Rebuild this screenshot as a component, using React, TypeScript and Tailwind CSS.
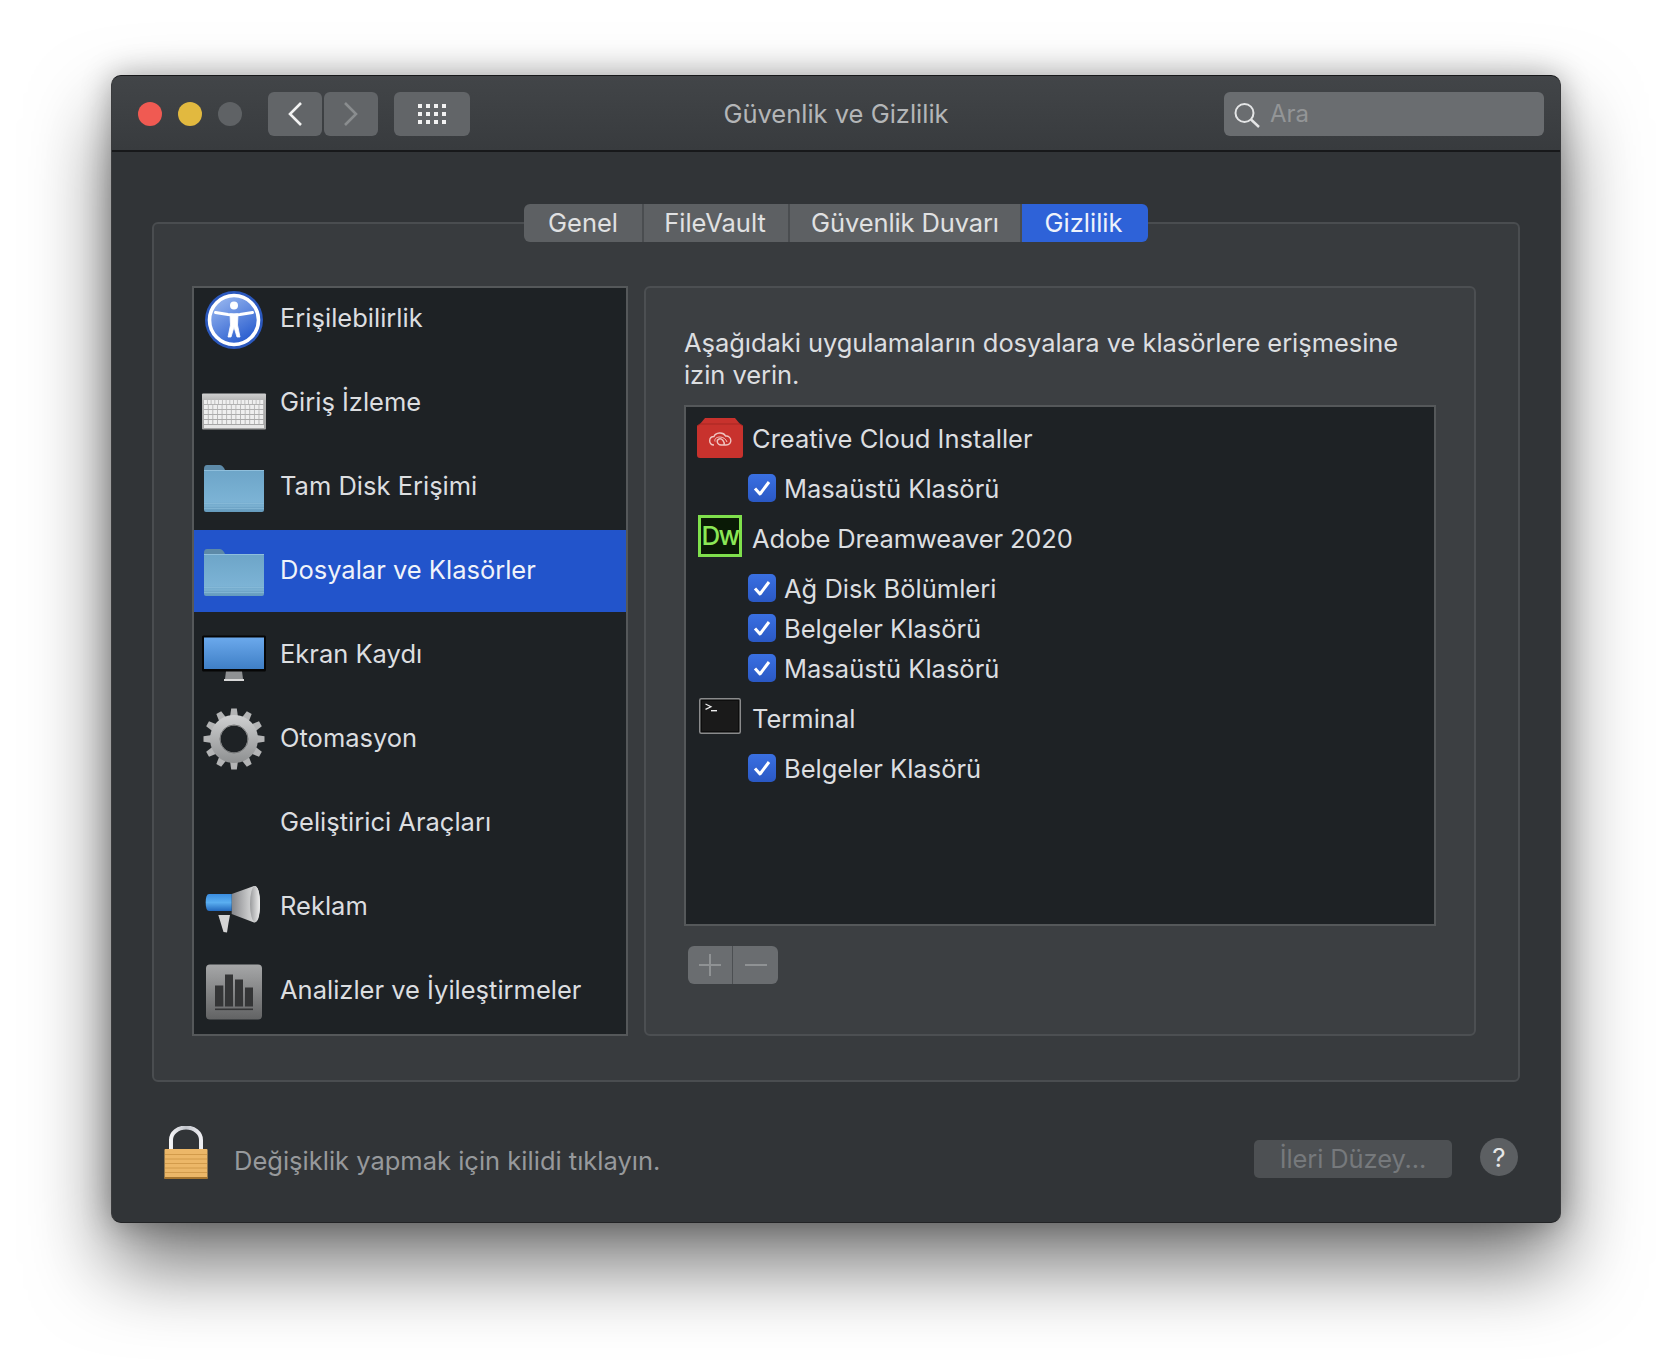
import type { ReactNode } from "react";

const FONT = { fontFamily: "Inter, 'Noto Sans', sans-serif" };

function AccessIcon() {
  return (
    <svg width="68" height="68" viewBox="0 0 68 68">
      <defs>
        <linearGradient id="acc" x1="0.2" y1="0" x2="0.8" y2="1">
          <stop offset="0" stopColor="#9ab8f0" />
          <stop offset="1" stopColor="#2056cc" />
        </linearGradient>
      </defs>
      <circle cx="34" cy="35" r="29" fill="#2b58bd" />
      <circle cx="34" cy="35" r="24.5" fill="url(#acc)" stroke="#fff" strokeWidth="3.6" />
      <circle cx="34" cy="20.5" r="4" fill="#fff" />
      <path d="M15.5 27.5 L28 29.5 Q34 30.3 40 29.5 L52.5 27.5" fill="none" stroke="#fff" strokeWidth="3" strokeLinecap="round" />
      <path d="M30 29 H38 L37.5 40 L40 52 H37 L34 42 L31 52 H28 L30.5 40Z" fill="#fff" stroke="#fff" strokeWidth="0.8" strokeLinejoin="round" />
    </svg>
  );
}

function KeyboardIcon() {
  const rows = [31, 36, 41, 46, 51];
  return (
    <svg width="68" height="68" viewBox="0 0 68 68">
      <defs>
        <linearGradient id="kb" x1="0" y1="0" x2="0" y2="1">
          <stop offset="0" stopColor="#d0d0d0" />
          <stop offset="0.2" stopColor="#b5b5b5" />
          <stop offset="1" stopColor="#a3a3a3" />
        </linearGradient>
      </defs>
      <rect x="2" y="24.5" width="64" height="36" rx="1" fill="url(#kb)" />
      {rows.map((y, r) => {
        const n = r === 0 ? 16 : 13;
        const w = 60 / n;
        return Array.from({ length: n }).map((_, i) => (
          <rect key={`${r}-${i}`} x={4 + i * w} y={y} width={w - 0.8} height="4" fill="#efefef" />
        ));
      })}
      <rect x="4" y="56" width="60" height="3" fill="#e6e6e6" />
    </svg>
  );
}

function FolderIcon({ id }: { id: string }) {
  return (
    <svg width="68" height="68" viewBox="0 0 68 68">
      <defs>
        <linearGradient id={id} x1="0" y1="0" x2="0" y2="1">
          <stop offset="0" stopColor="#6da5c8" />
          <stop offset="0.75" stopColor="#7cb3d5" />
          <stop offset="1" stopColor="#659bbd" />
        </linearGradient>
      </defs>
      <path d="M4 16 Q4 12 7 12 H20 Q22 12 24 15 L25 17 H64 V30 H4Z" fill="#5d8aa8" />
      <rect x="4" y="17" width="60" height="42" rx="2" fill={`url(#${id})`} />
      <rect x="4" y="17" width="60" height="1" fill="#8fbfdc" />
      <path d="M4 50.5 H64 M4 53 H64 M4 55.5 H64" stroke="#8ebfdb" strokeWidth="0.6" />
    </svg>
  );
}

function MonitorIcon() {
  return (
    <svg width="68" height="68" viewBox="0 0 68 68">
      <defs>
        <linearGradient id="scr" x1="0" y1="0" x2="0" y2="1">
          <stop offset="0" stopColor="#6ba9ec" />
          <stop offset="1" stopColor="#3f7fc6" />
        </linearGradient>
      </defs>
      <path d="M26 50 H42 L43 58 H25Z" fill="#8f9193" />
      <rect x="24" y="58" width="20" height="2" fill="#d8d8d8" />
      <rect x="2" y="14.5" width="64" height="36" rx="1.5" fill="#060606" />
      <rect x="4" y="16.5" width="60" height="31.5" fill="url(#scr)" />
    </svg>
  );
}

function GearIcon() {
  const teeth = Array.from({ length: 12 }, (_, i) => i * 30);
  return (
    <svg width="68" height="68" viewBox="0 0 68 68">
      <defs>
        <linearGradient id="gear" x1="0" y1="0" x2="0" y2="1">
          <stop offset="0" stopColor="#cfd0d1" />
          <stop offset="1" stopColor="#8e9091" />
        </linearGradient>
      </defs>
      <g transform="translate(0 1)">
        {teeth.map((a) => (
          <path key={a} d="M30 11 L31.2 2.5 H36.8 L38 11Z" transform={`rotate(${a} 34 33)`} fill="#b3b4b5" />
        ))}
        <path fill="url(#gear)" fillRule="evenodd" d="M34 9 a24 24 0 1 0 0.01 0Z M34 19.5 a13.5 13.5 0 1 1 -0.01 0Z" />
        <circle cx="34" cy="33" r="14" fill="none" stroke="#707273" strokeWidth="1" />
      </g>
    </svg>
  );
}

function MegaphoneIcon() {
  return (
    <svg width="68" height="68" viewBox="0 0 68 68">
      <defs>
        <linearGradient id="mg1" x1="0" y1="0" x2="0" y2="1">
          <stop offset="0" stopColor="#3a8de0" />
          <stop offset="0.5" stopColor="#5aaef0" />
          <stop offset="1" stopColor="#2369bd" />
        </linearGradient>
        <linearGradient id="mg2" x1="0" y1="0" x2="1" y2="0">
          <stop offset="0" stopColor="#85868a" />
          <stop offset="0.6" stopColor="#c8c9ca" />
          <stop offset="1" stopColor="#e4e4e4" />
        </linearGradient>
        <linearGradient id="mg3" x1="0" y1="0" x2="1" y2="0">
          <stop offset="0" stopColor="#9a9b9d" />
          <stop offset="1" stopColor="#efefef" />
        </linearGradient>
      </defs>
      <g transform="translate(0 2)">
        <path d="M18.3 40 L30 40 L28.5 48 L27 57.5 L23.5 57 Z" fill="#d4d4d4" />
        <path d="M31.7 19 L54 11 Q60 11 60 29 Q60 47.5 54 47.5 L31.7 39 Z" fill="url(#mg2)" />
        <ellipse cx="55" cy="29" rx="5" ry="18" fill="url(#mg3)" />
        <path d="M9 19 H31.7 V36 H9 Q5.7 36 5.7 27.5 Q5.7 19 9 19Z" fill="url(#mg1)" />
      </g>
    </svg>
  );
}

function ChartIcon() {
  return (
    <svg width="68" height="68" viewBox="0 0 68 68">
      <defs>
        <linearGradient id="ch" x1="0" y1="0" x2="0" y2="1">
          <stop offset="0" stopColor="#a6a7a8" />
          <stop offset="1" stopColor="#626364" />
        </linearGradient>
      </defs>
      <g transform="translate(0 2)">
        <rect x="6" y="5.5" width="56" height="55" rx="4" fill="url(#ch)" />
        <rect x="15" y="26.5" width="8.3" height="21" fill="#343536" />
        <rect x="25" y="15.5" width="8" height="32" fill="#343536" />
        <rect x="35" y="20.5" width="8" height="27" fill="#343536" />
        <rect x="45" y="28.5" width="8" height="19" fill="#343536" />
        <rect x="15" y="49.5" width="38" height="1.6" fill="#343536" />
      </g>
    </svg>
  );
}

function CreativeCloudIcon() {
  return (
    <svg width="46" height="40" viewBox="0 0 46 40">
      <path d="M3 6 L8 0 H38 L43 6 L46 8 V37 Q46 40 43 40 H3 Q0 40 0 37 V8Z" fill="#c8322d" />
      <path d="M0 8 L3 6 H43 L46 8" fill="none" stroke="#a72723" strokeWidth="1" />
      <path d="M17 27 C11 27 11.5 18.5 17 18.5 C18.5 14.5 26 13.5 28.5 18 C35 17.5 36 27 29 27 H24 C20 27 19 22 22 21 C25 20 28 24 27 27" fill="none" stroke="#f0c4c0" strokeWidth="1.4" />
      <path d="M18 23.5 C17 20.5 20 19 23 19 C26 19 29 21 30 24" fill="none" stroke="#f0c4c0" strokeWidth="1" />
    </svg>
  );
}

function DreamweaverIcon() {
  return (
    <div className="w-[44px] h-[42px] border-[3px] border-[#7fe04c] bg-[#0a1a06] flex items-center justify-center text-[26px] leading-none font-medium tracking-[-1.6px] text-[#8be856]">
      Dw
    </div>
  );
}

function TerminalIcon() {
  return (
    <svg width="42" height="36" viewBox="0 0 42 36">
      <rect x="0.75" y="0.75" width="40.5" height="34.5" rx="1.5" fill="#0d0d0d" stroke="#8a8b8c" strokeWidth="1.5" />
      <rect x="3" y="3" width="36" height="30" fill="#1a1a1a" />
      <path d="M6.5 6 L12 8.7 L6.5 11.4" fill="none" stroke="#eee" strokeWidth="1.2" />
      <path d="M12 12.7 H18" stroke="#eee" strokeWidth="1.4" />
    </svg>
  );
}

function LockIcon() {
  return (
    <svg width="44" height="53" viewBox="0 0 44 53">
      <defs>
        <linearGradient id="shackle" x1="0" y1="0" x2="1" y2="0">
          <stop offset="0" stopColor="#f4f4f6" />
          <stop offset="0.5" stopColor="#c0c3ca" />
          <stop offset="1" stopColor="#eeeef2" />
        </linearGradient>
      </defs>
      <path d="M7 24 V14 A15 12.5 0 0 1 37 14 V24" fill="none" stroke="url(#shackle)" strokeWidth="4" />
      <rect x="0.5" y="23" width="43" height="30" rx="1" fill="#ecb768" />
      <path d="M1 28.5 H43 M1 33 H43 M1 37.5 H43 M1 42 H43 M1 46.5 H43" stroke="#cf9748" strokeWidth="0.9" />
      <rect x="0.5" y="51" width="43" height="2" fill="#a5742e" />
    </svg>
  );
}

function CheckRow({ label, mt }: { label: string; mt: string }) {
  return (
    <div className={`flex items-center h-[28px] ml-[62px] ${mt}`}>
      <div className="w-[28px] h-[28px] rounded-[5px] bg-gradient-to-b from-[#3a70e2] to-[#2a58c4] flex items-center justify-center shrink-0">
        <svg width="20" height="18" viewBox="0 0 20 18">
          <path d="M3 9.5 L8 15 L17 3" fill="none" stroke="#fff" strokeWidth="3" strokeLinejoin="round" />
        </svg>
      </div>
      <span className="ml-[8px] translate-y-[1px] text-[25.5px] text-[#dcdee0] whitespace-nowrap">{label}</span>
    </div>
  );
}

type AppRowProps = {
  label: string;
  icon: ReactNode;
  h: string;
  mt: string;
  iconBox: string;
  text: string;
};

function AppRow({ label, icon, h, mt, iconBox, text }: AppRowProps) {
  return (
    <div className={`flex items-center ${h} ${mt}`}>
      <div className={`${iconBox} shrink-0 flex`}>{icon}</div>
      <span className={`text-[25.5px] text-[#dcdee0] whitespace-nowrap ${text}`}>{label}</span>
    </div>
  );
}

const categories = [
  { label: "Erişilebilirlik", icon: <AccessIcon /> },
  { label: "Giriş İzleme", icon: <KeyboardIcon /> },
  { label: "Tam Disk Erişimi", icon: <FolderIcon id="fld1" /> },
  { label: "Dosyalar ve Klasörler", icon: <FolderIcon id="fld2" />, selected: true },
  { label: "Ekran Kaydı", icon: <MonitorIcon /> },
  { label: "Otomasyon", icon: <GearIcon /> },
  { label: "Geliştirici Araçları", icon: null },
  { label: "Reklam", icon: <MegaphoneIcon /> },
  { label: "Analizler ve İyileştirmeler", icon: <ChartIcon /> },
];

const tabs = [
  { label: "Genel", w: "w-[120px]" },
  { label: "FileVault", w: "w-[146px] pr-[2px]" },
  { label: "Güvenlik Duvarı", w: "w-[232px] tracking-[-0.12px]" },
  { label: "Gizlilik", w: "w-[126px] pr-[3px]", selected: true },
];

export default function App() {
  return (
    <div className="min-h-[1370px] bg-white pt-[75px] pl-[111px] overflow-hidden" style={FONT}>
      <div className="w-[1450px] h-[1148px] rounded-[10px] bg-[#313437] flex flex-col overflow-hidden border border-[#3a3b3d] border-t-[#17181a] border-b-[#222325] shadow-[0_42px_80px_rgba(0,0,0,0.55),0_0_30px_rgba(0,0,0,0.3)]">
        {/* title bar */}
        <div className="h-[76px] shrink-0 grid grid-cols-[1fr_auto_1fr] items-center bg-gradient-to-b from-[#424548] to-[#383b3e] border-b-2 border-b-[#17181a] px-[16px] pt-[2px]">
          <div className="flex items-center ml-[10px]">
            <div className="w-[24px] h-[24px] rounded-full bg-[#f05a52]" />
            <div className="w-[24px] h-[24px] rounded-full bg-[#e2b93f] ml-[16px]" />
            <div className="w-[24px] h-[24px] rounded-full bg-[#5f6265] ml-[16px]" />
            <button className="ml-[26px] w-[54px] h-[44px] rounded-[6px] bg-[#626568] flex items-center justify-center">
              <svg width="16" height="26" viewBox="0 0 16 26">
                <path d="M14 2 L3 13 L14 24" fill="none" stroke="#f2f2f2" strokeWidth="2.6" />
              </svg>
            </button>
            <button className="ml-[2px] w-[54px] h-[44px] rounded-[6px] bg-[#626568] flex items-center justify-center">
              <svg width="16" height="26" viewBox="0 0 16 26">
                <path d="M2 2 L13 13 L2 24" fill="none" stroke="#8a8d8f" strokeWidth="2.6" />
              </svg>
            </button>
            <button className="ml-[16px] w-[76px] h-[44px] rounded-[6px] bg-[#626568] flex items-center justify-center">
              <svg width="30" height="22" viewBox="0 0 30 22">
                {[1, 9, 17].map((y) =>
                  [1, 9, 17, 25].map((x) => <rect key={`${x}-${y}`} x={x} y={y} width="4" height="4" fill="#f2f2f2" />)
                )}
              </svg>
            </button>
          </div>
          <div className="text-[25.5px] text-[#b4b6b8] whitespace-nowrap">Güvenlik ve Gizlilik</div>
          <div className="justify-self-end w-[320px] h-[44px] rounded-[6px] bg-[#6a6d70] flex items-center pl-[10px]">
            <svg width="28" height="30" viewBox="0 0 28 30">
              <circle cx="10.5" cy="14" r="9" fill="none" stroke="#e4e5e6" strokeWidth="2" />
              <path d="M17 20.5 L25 28" stroke="#e4e5e6" strokeWidth="2.4" />
            </svg>
            <span className="ml-[8px] text-[24px] text-[#939597]">Ara</span>
          </div>
        </div>

        {/* group box */}
        <div className="ml-[40px] mt-[70px] w-[1368px] h-[860px] rounded-[6px] bg-[#383b3e] border-2 border-[#4a4d50] shrink-0">
          <div className="-mt-[20px] flex justify-center">
            {tabs.map((t, i) => (
              <div
                key={t.label}
                className={`h-[38px] flex items-center justify-center text-[25.5px] ${t.w} ${
                  t.selected
                    ? "bg-[#2e62d8] text-[#eef2fb] rounded-r-[6px]"
                    : `bg-[#5d6063] text-[#e0e1e2] border-r-2 border-r-[#4a4d50] ${i === 0 ? "rounded-l-[6px]" : ""}`
                }`}
              >
                {t.label}
              </div>
            ))}
          </div>
          <div className="mt-[44px] pl-[38px] flex">
            {/* categories */}
            <div className="w-[436px] h-[750px] bg-[#1e2225] border-2 border-[#55585a] overflow-hidden shrink-0">
              <div className="-mt-[11px]">
                {categories.map((c) => (
                  <div key={c.label} className="h-[84px] py-px">
                    <div className={`h-full flex items-center pl-[6px] ${c.selected ? "bg-[#2254cb]" : ""}`}>
                      <div className="w-[68px] h-[68px] shrink-0 flex">{c.icon}</div>
                      <span className={`ml-[12px] -translate-y-[1px] text-[25.5px] whitespace-nowrap ${c.selected ? "text-[#f0f3fa]" : "text-[#dcdee0]"}`}>
                        {c.label}
                      </span>
                    </div>
                  </div>
                ))}
              </div>
            </div>

            {/* detail panel */}
            <div className="ml-[16px] w-[832px] h-[750px] rounded-[6px] bg-[#3c3f42] border-2 border-[#4c4f52] pl-[38px] pt-[39px]">
              <p className="w-[730px] text-[25.5px] leading-[32px] tracking-[-0.055px] text-[#dcdee0]">
                Aşağıdaki uygulamaların dosyalara ve klasörlere erişmesine izin verin.
              </p>
              <div className="mt-[14px] w-[752px] h-[521px] bg-[#1e2225] border-2 border-[#55585a]">
                <AppRow label="Creative Cloud Installer" icon={<CreativeCloudIcon />} h="h-[40px]" mt="mt-[11px]" iconBox="ml-[11px] w-[46px]" text="ml-[9px] translate-y-[1px]" />
                <CheckRow label="Masaüstü Klasörü" mt="mt-[16px]" />
                <AppRow label="Adobe Dreamweaver 2020" icon={<DreamweaverIcon />} h="h-[42px]" mt="mt-[13px]" iconBox="ml-[12px] w-[44px]" text="ml-[10px] translate-y-[3px] tracking-[-0.14px]" />
                <CheckRow label="Ağ Disk Bölümleri" mt="mt-[17px]" />
                <CheckRow label="Belgeler Klasörü" mt="mt-[12px]" />
                <CheckRow label="Masaüstü Klasörü" mt="mt-[12px]" />
                <AppRow label="Terminal" icon={<TerminalIcon />} h="h-[36px]" mt="mt-[16px]" iconBox="ml-[13px] w-[42px]" text="ml-[11px] translate-y-[3px]" />
                <CheckRow label="Belgeler Klasörü" mt="mt-[20px]" />
              </div>
              <div className="mt-[20px] ml-[4px] w-[90px] h-[38px] flex rounded-[6px] overflow-hidden bg-[#6a6d70]">
                <div className="w-[45px] h-full flex items-center justify-center border-r border-r-[#4c4f52]">
                  <svg width="24" height="24" viewBox="0 0 24 24">
                    <path d="M12 1 V23 M1 12 H23" stroke="#8f9294" strokeWidth="2" />
                  </svg>
                </div>
                <div className="flex-1 flex items-center justify-center">
                  <svg width="24" height="24" viewBox="0 0 24 24">
                    <path d="M1 12 H23" stroke="#8f9294" strokeWidth="2" />
                  </svg>
                </div>
              </div>
            </div>
          </div>
        </div>

        {/* footer */}
        <div className="flex-1 flex pl-[52px] pr-[42px]">
          <div className="mt-[44px] flex items-start">
            <LockIcon />
            <span className="ml-[26px] mt-[16px] text-[25.5px] text-[#97999c] whitespace-nowrap">
              Değişiklik yapmak için kilidi tıklayın.
            </span>
          </div>
          <div className="ml-auto mt-[58px] w-[198px] h-[38px] rounded-[5px] bg-[#4d5053] flex items-center justify-center text-[25.5px] tracking-[-0.1px] text-[#76797c]">
            İleri Düzey...
          </div>
          <div className="ml-[28px] mt-[56px] w-[38px] h-[38px] rounded-full bg-[#5c5f62] flex items-center justify-center text-[26px] text-[#e6e7e8]">
            ?
          </div>
        </div>
      </div>
    </div>
  );
}
